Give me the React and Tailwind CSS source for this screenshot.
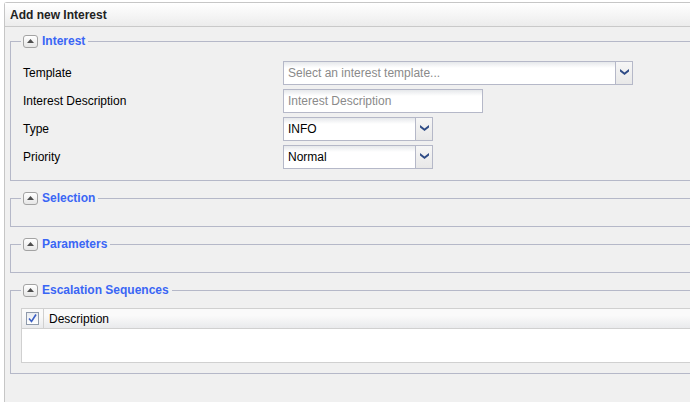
import React from 'react';

const FONT = { fontFamily: '"Liberation Sans", Arial, sans-serif' };

function CollapseButton() {
  return (
    <span className="flex h-[13px] w-[15px] items-center justify-center rounded-[3px] border border-[#a3a3a3] bg-[linear-gradient(#ffffff,#e6e6e6)]">
      <svg width="7" height="4" viewBox="0 0 7 4">
        <path d="M0 4 L3.5 0 L7 4 Z" fill="#4d4d4d" />
      </svg>
    </span>
  );
}

function Section({ title, className = '', children }) {
  return (
    <fieldset className={`ml-[5px] w-[720px] border border-[#b5b8c8] pl-[10px] ${className}`}>
      <legend className="px-[2px]">
        <span className="flex h-[16px] items-center gap-[4px]">
          <CollapseButton />
          <span className="pr-[1px] text-[12px] font-bold text-[#3a66f5]">{title}</span>
        </span>
      </legend>
      {children}
    </fieldset>
  );
}

function Chevron() {
  return (
    <svg width="9" height="6" viewBox="0 0 9 6">
      <path d="M0 0 L4.5 3.5 L9 0 L9 2.5 L4.5 6 L0 2.5 Z" fill="#2f4c86" />
    </svg>
  );
}

function Combo({ width, value, placeholder }) {
  return (
    <div className={`flex h-[24px] border border-[#b5b8c8] ${width}`}>
      <div className="flex flex-1 items-center bg-[linear-gradient(#e6e8eb,#ffffff_6px)] px-[4px] text-[12px]">
        {value ? <span className="text-black">{value}</span> : <span className="text-[#8a8a8a]">{placeholder}</span>}
      </div>
      <div className="flex w-[17px] items-center justify-center border-l border-[#b5b8c8] bg-[linear-gradient(#f6f6f6,#e8e8e8)] pb-[2px]">
        <Chevron />
      </div>
    </div>
  );
}

function TextField({ width, placeholder }) {
  return (
    <div className={`flex h-[24px] items-center border border-[#b5b8c8] bg-[linear-gradient(#e6e8eb,#ffffff_6px)] px-[4px] text-[12px] text-[#8a8a8a] ${width}`}>
      {placeholder}
    </div>
  );
}

const ROWS = [
  { label: 'Template', field: <Combo width="w-[350px]" placeholder="Select an interest template..." /> },
  { label: 'Interest Description', field: <TextField width="w-[200px]" placeholder="Interest Description" /> },
  { label: 'Type', field: <Combo width="w-[150px]" value="INFO" /> },
  { label: 'Priority', field: <Combo width="w-[150px]" value="Normal" /> },
];

export default function App() {
  return (
    <div className="h-[402px] w-[690px] overflow-hidden bg-white pt-[2px] pl-[4px]" style={FONT}>
      <div className="h-[400px] w-[760px] rounded-tl-[3px] border-t border-l border-[#c6c6c6] bg-[#f0f0f0]">
        <div className="flex h-[24px] items-center border-b border-[#c9c9c9] bg-[linear-gradient(#ffffff,#ececec)] pl-[5px] text-[12px] font-bold text-[#222]">
          Add new Interest
        </div>

        <div className="pt-[6px]">
          <Section title="Interest" className="pt-[12px] pb-[11px]">
            <div className="flex flex-col gap-[4px]">
              {ROWS.map(row => (
                <div key={row.label} className="flex h-[24px] items-center">
                  <span className="w-[262px] pl-[2px] text-[12px] text-black">{row.label}</span>
                  {row.field}
                </div>
              ))}
            </div>
          </Section>

          <Section title="Selection" className="mt-[9px] h-[37px]" />

          <Section title="Parameters" className="mt-[9px] h-[37px]" />

          <Section title="Escalation Sequences" className="mt-[9px] pt-[10px] pb-[10px]">
            <div className="w-[700px] border-y border-l border-[#d0d0d0] bg-white">
              <div className="flex h-[20px] border-b border-[#d0d0d0] bg-[linear-gradient(#fafafa_35%,#e9eaec)]">
                <div className="flex w-[22px] items-center justify-center border-r border-[#d0d0d0]">
                  <span className="flex h-[13px] w-[13px] items-center justify-center border border-[#8f9aab] bg-[linear-gradient(#e9ecf1,#ffffff)]">
                    <svg width="9" height="9" viewBox="0 0 9 9">
                      <path d="M1 4.5 L3.5 7.5 L8 0.5" fill="none" stroke="#3b5fc4" strokeWidth="1.6" />
                    </svg>
                  </span>
                </div>
                <div className="flex items-center pl-[5px] text-[12px] text-black">Description</div>
              </div>
              <div className="h-[33px]" />
            </div>
          </Section>
        </div>
      </div>
    </div>
  );
}
